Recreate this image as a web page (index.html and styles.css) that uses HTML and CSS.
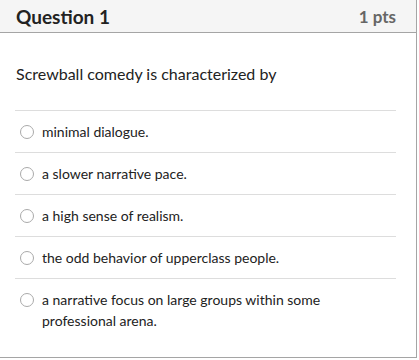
FILE: index.html
```html
<!DOCTYPE html>
<html lang="en">
<head>
    <meta charset="UTF-8">
    <meta name="viewport" content="width=device-width, initial-scale=1.0">
    <title>Question 1</title>
    <link rel="stylesheet" href="styles.css">
</head>
<body>
    <div class="question">
        <div class="question-header">
            <h2>Question 1</h2>
            <span class="points">1 pts</span>
        </div>
        <div class="question-body">
            <p class="question-text">Screwball comedy is characterized by</p>
            <div class="answers">
                <label class="answer"><input type="radio" name="q1"><span>minimal dialogue.</span></label>
                <label class="answer"><input type="radio" name="q1"><span>a slower narrative pace.</span></label>
                <label class="answer"><input type="radio" name="q1"><span>a high sense of realism.</span></label>
                <label class="answer"><input type="radio" name="q1"><span>the odd behavior of upperclass people.</span></label>
                <label class="answer"><input type="radio" name="q1"><span>a narrative focus on large groups within some professional arena.</span></label>
            </div>
        </div>
    </div>
</body>
</html>
```

FILE: styles.css
```css
body {
    margin: 0;
    font-family: Lato, "Noto Sans", sans-serif;
    color: #2d3b45;
}
.question {
    width: 416px;
    height: 357px;
    border-right: 1px solid #a5a5a5;
    border-bottom: 1px solid #a5a5a5;
}
.question-header {
    display: flex;
    justify-content: space-between;
    align-items: center;
    height: 32px;
    padding: 0 20px 0 16px;
    background-color: #f5f5f5;
    border-bottom: 1px solid #a5a5a5;
}
.question-header h2 {
    margin: 0;
    font-size: 19px;
    font-weight: bold;
    color: #222;
}
.points {
    font-size: 17px;
    font-weight: bold;
    color: #666;
}
.question-body {
    padding: 0 20px 0 15px;
}
.question-text {
    margin: 0;
    padding: 30px 0 0 1px;
    height: 47px;
    font-size: 16px;
    line-height: 21px;
    color: #222;
}
.answer {
    display: flex;
    align-items: flex-start;
    gap: 8px;
    padding: 10px 0 10px 5px;
    border-top: 1px solid #ddd;
    font-size: 14px;
    line-height: 21px;
    color: #222;
}
.answer input {
    appearance: none;
    -webkit-appearance: none;
    flex: none;
    width: 14px;
    height: 14px;
    margin: 4px 0 0;
    border: 1px solid #aaa;
    border-radius: 50%;
    background: #fff;
}
.answer span {
    width: 300px;
}
```
